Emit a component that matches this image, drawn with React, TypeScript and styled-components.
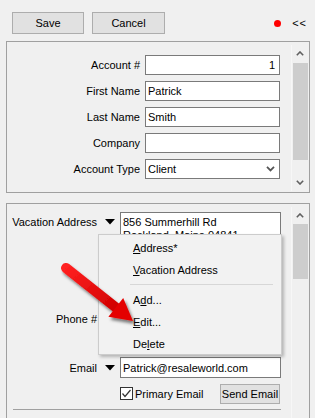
import React from 'react';
import styled, { createGlobalStyle } from 'styled-components';

const GlobalStyle = createGlobalStyle`
  html, body {
    margin: 0;
    padding: 0;
    background: #f0f0f0;
    overflow: hidden;
  }
  body {
    font-family: 'Liberation Sans', Arial, sans-serif;
    font-size: 11px;
    color: #000;
  }
  * {
    box-sizing: border-box;
  }
`;

const Window = styled.div`
  position: relative;
  width: 315px;
  height: 418px;
  overflow: hidden;
  background: #f0f0f0;
`;

const Toolbar = styled.div`
  display: flex;
  align-items: center;
  gap: 8px;
  height: 34px;
  padding: 12px 8px 0 12px;
`;

const WinButton = styled.button<{ $width: number }>`
  width: ${(p) => p.$width}px;
  height: 22px;
  background: #e1e1e1;
  border: 1px solid #adadad;
  font-family: inherit;
  font-size: 11px;
  color: #000;
  padding: 0;
`;

const Spacer = styled.div`
  flex: 1;
`;

const StatusDot = styled.span`
  width: 7px;
  height: 7px;
  border-radius: 50%;
  background: #ff0000;
  margin-right: 3px;
`;

const CollapseLabel = styled.span`
  font-size: 11px;
  letter-spacing: 1px;
`;

const Panel = styled.div<{ $top: number; $height: number; $open?: boolean }>`
  display: flex;
  margin: ${(p) => p.$top}px 0 0 6px;
  width: 304px;
  height: ${(p) => p.$height}px;
  border: 1px solid #a0a0a0;
  border-bottom: ${(p) => (p.$open ? 'none' : '1px solid #a0a0a0')};
`;

const FormGrid = styled.div`
  flex: 1;
  display: grid;
  grid-template-columns: 133px 135px;
  grid-auto-rows: 20px;
  column-gap: 5px;
  row-gap: 6px;
  align-content: start;
  padding-top: 13px;
`;

const Label = styled.label`
  align-self: center;
  text-align: right;
  white-space: nowrap;
`;

const TextInput = styled.div<{ $align?: string }>`
  height: 20px;
  border: 1px solid #7a7a7a;
  background: #fff;
  padding: 0 4px 0 2px;
  display: flex;
  align-items: center;
  justify-content: ${(p) => (p.$align === 'right' ? 'flex-end' : 'space-between')};
  white-space: nowrap;
`;

const ScrollTrack = styled.div<{ $mt: number }>`
  width: 17px;
  margin: ${(p) => p.$mt}px 1px 1px 0;
  display: flex;
  flex-direction: column;
  align-items: center;
  border-left: 1px solid #f7f7f7;
`;

const ScrollArrow = styled.div`
  height: 17px;
  width: 100%;
  display: flex;
  align-items: center;
  justify-content: center;
`;

const ScrollThumb = styled.div<{ $height: number }>`
  width: 15px;
  height: ${(p) => p.$height}px;
  background: #cdcdcd;
`;

const AddressGrid = styled.div`
  flex: 1;
  display: grid;
  grid-template-columns: 90px 23px 161px;
  align-content: start;
  padding-top: 8px;
`;

const FieldLabel = styled.label<{ $top?: boolean; $mt?: number }>`
  align-self: ${(p) => (p.$top ? 'start' : 'center')};
  padding-top: ${(p) => (p.$top ? '4px' : '0')};
  margin-top: ${(p) => p.$mt || 0}px;
  text-align: right;
  white-space: nowrap;
`;

const Caret = styled.div<{ $top?: boolean; $mt?: number }>`
  align-self: ${(p) => (p.$top ? 'start' : 'center')};
  padding-top: ${(p) => (p.$top ? '7px' : '0')};
  margin-top: ${(p) => p.$mt || 0}px;
  display: flex;
  justify-content: center;
  padding-left: 2px;
`;

const TextArea = styled.div`
  height: 69px;
  border: 1px solid #7a7a7a;
  background: #fff;
  padding: 3px 2px;
  line-height: 13px;
`;

const Field = styled(TextInput)<{ $mt: number }>`
  height: 21px;
  margin-top: ${(p) => p.$mt}px;
`;

const CheckRow = styled.div`
  grid-column: 3;
  margin-top: 6px;
  display: flex;
  align-items: center;
  height: 20px;
`;

const CheckBox = styled.span`
  width: 13px;
  height: 13px;
  border: 1px solid #333;
  background: #fff;
  display: flex;
  align-items: center;
  justify-content: center;
  margin-right: 2px;
  margin-top: -2px;
`;

const SendButton = styled.button`
  margin-left: auto;
  margin-right: 1px;
  width: 60px;
  height: 20px;
  background: #e1e1e1;
  border: 1px solid #adadad;
  font-family: inherit;
  font-size: 11px;
  color: #000;
  padding: 0;
`;

const Divider = styled.div`
  grid-column: 1 / 4;
  margin: 5px 0 0 6px;
  height: 1px;
  background: #a0a0a0;
`;

const Menu = styled.div`
  position: absolute;
  left: 98px;
  top: 234px;
  width: 184px;
  height: 121px;
  background: #f2f2f2;
  border: 1px solid #cccccc;
  box-shadow: 2px 2px 3px rgba(0, 0, 0, 0.25);
  padding: 2px;
`;

const MenuItem = styled.div`
  height: 22px;
  line-height: 22px;
  padding-left: 32px;
  font-size: 11px;
  white-space: nowrap;
`;

const MenuSeparator = styled.div`
  height: 1px;
  background: #d7d7d7;
  margin: 3px 6px 4px 29px;
`;

const Underlined = styled.span`
  text-decoration: underline;
`;

const ArrowLayer = styled.svg`
  position: absolute;
  left: 0;
  top: 0;
  pointer-events: none;
`;

const Chevron: React.FC<{ up?: boolean; size?: number; color?: string }> = ({
  up,
  size = 8,
  color = '#606060',
}) => (
  <svg width={size} height={size / 2 + 1} viewBox="0 0 8 5">
    <polyline
      points={up ? '0.8,4.2 4,1 7.2,4.2' : '0.8,0.8 4,4 7.2,0.8'}
      fill="none"
      stroke={color}
      strokeWidth="1.6"
    />
  </svg>
);

const DownTriangle = () => (
  <svg width="10" height="6" viewBox="0 0 10 6">
    <polygon points="0,0 10,0 5,5.5" fill="#000" />
  </svg>
);

const Scrollbar: React.FC<{ mt: number; thumbGap: number; thumb: number }> = ({
  mt,
  thumbGap,
  thumb,
}) => (
  <ScrollTrack $mt={mt}>
    <ScrollArrow>
      <Chevron up />
    </ScrollArrow>
    <div style={{ height: thumbGap }} />
    <ScrollThumb $height={thumb} />
    <Spacer />
    <ScrollArrow>
      <Chevron />
    </ScrollArrow>
  </ScrollTrack>
);

export default function App() {
  return (
    <Window>
      <GlobalStyle />
      <Toolbar>
        <WinButton $width={72}>Save</WinButton>
        <WinButton $width={73}>Cancel</WinButton>
        <Spacer />
        <StatusDot />
        <CollapseLabel>{'<<'}</CollapseLabel>
      </Toolbar>

      <Panel $top={7} $height={152}>
        <FormGrid>
          <Label>Account #</Label>
          <TextInput $align="right">1</TextInput>
          <Label>First Name</Label>
          <TextInput>Patrick</TextInput>
          <Label>Last Name</Label>
          <TextInput>Smith</TextInput>
          <Label>Company</Label>
          <TextInput />
          <Label>Account Type</Label>
          <TextInput>
            <span>Client</span>
            <Chevron size={9} color="#555" />
          </TextInput>
        </FormGrid>
        <Scrollbar mt={3} thumbGap={1} thumb={97} />
      </Panel>

      <Panel $top={10} $height={240} $open>
        <AddressGrid>
          <FieldLabel $top>Vacation Address</FieldLabel>
          <Caret $top>
            <DownTriangle />
          </Caret>
          <TextArea>
            856 Summerhill Rd
            <br />
            Rockland, Maine 04841
          </TextArea>

          <FieldLabel $mt={27}>Phone #</FieldLabel>
          <Caret $mt={27}>
            <DownTriangle />
          </Caret>
          <Field $mt={27} />

          <FieldLabel $mt={28}>Email</FieldLabel>
          <Caret $mt={28}>
            <DownTriangle />
          </Caret>
          <Field $mt={28}>Patrick@resaleworld.com</Field>

          <CheckRow>
            <CheckBox>
              <svg width="11" height="11" viewBox="0 0 11 11">
                <polyline points="1.5,5.5 4,8.5 9.5,2" fill="none" stroke="#333" strokeWidth="1.2" />
              </svg>
            </CheckBox>
            <span>Primary Email</span>
            <SendButton>Send Email</SendButton>
          </CheckRow>
          <Divider />
        </AddressGrid>
        <Scrollbar mt={3} thumbGap={0} thumb={55} />
      </Panel>

      <Menu>
        <MenuItem>
          <Underlined>A</Underlined>ddress*
        </MenuItem>
        <MenuItem>
          <Underlined>V</Underlined>acation Address
        </MenuItem>
        <MenuSeparator />
        <MenuItem>
          A<Underlined>d</Underlined>d...
        </MenuItem>
        <MenuItem>
          <Underlined>E</Underlined>dit...
        </MenuItem>
        <MenuItem>
          De<Underlined>l</Underlined>ete
        </MenuItem>
      </Menu>

      <ArrowLayer width="315" height="418" viewBox="0 0 315 418">
        <defs>
          <filter id="arrowShadow" x="-20%" y="-20%" width="140%" height="140%">
            <feDropShadow dx="2" dy="3" stdDeviation="1.6" floodColor="#000" floodOpacity="0.5" />
          </filter>
          <linearGradient id="arrowFill" x1="0" y1="0" x2="1" y2="1">
            <stop offset="0" stopColor="#ff2020" />
            <stop offset="1" stopColor="#d00000" />
          </linearGradient>
        </defs>
        <g filter="url(#arrowShadow)">
          <line x1="66" y1="268" x2="117" y2="308.3" stroke="url(#arrowFill)" strokeWidth="10" strokeLinecap="round" />
          <polygon points="123.2,298 133,321 108.4,316.8" fill="#e40606" />
        </g>
      </ArrowLayer>
    </Window>
  );
}
